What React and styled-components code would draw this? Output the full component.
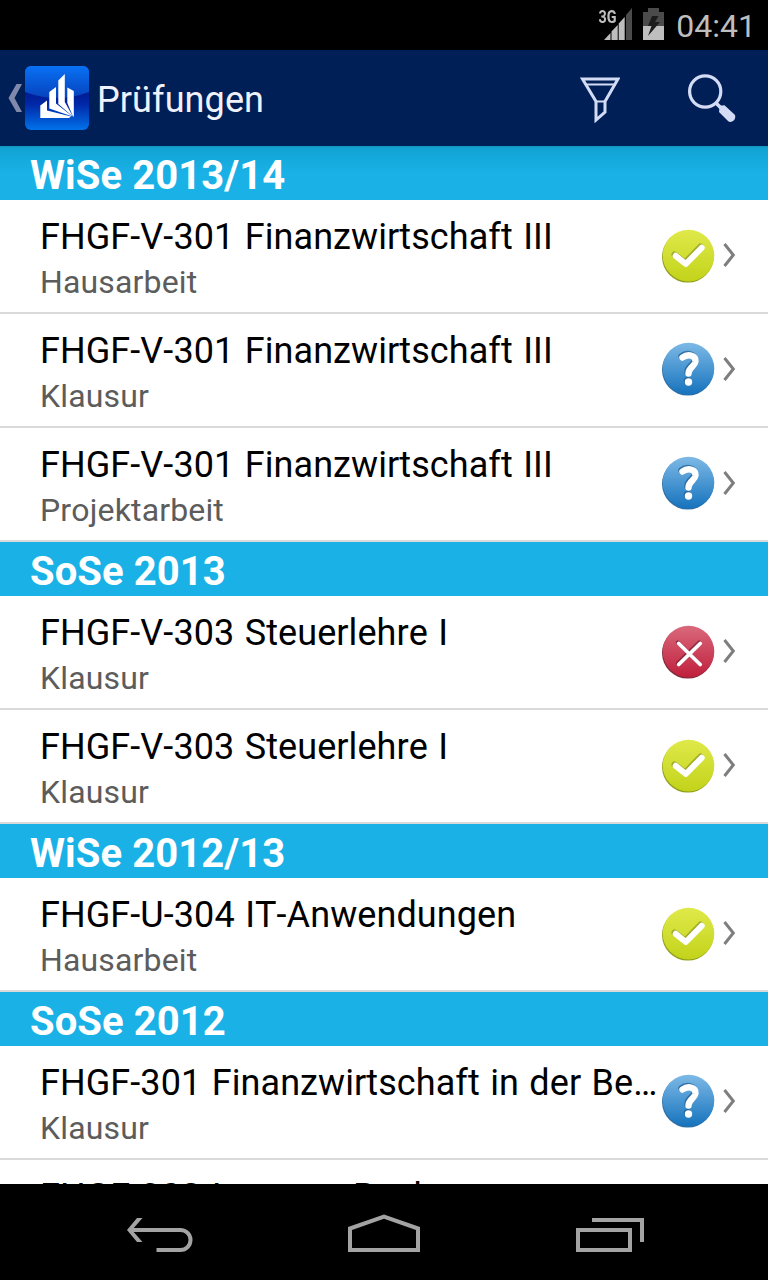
import styled, { createGlobalStyle } from 'styled-components';

const sections = [
  {
    term: 'WiSe 2013/14',
    exams: [
      { title: 'FHGF-V-301 Finanzwirtschaft III', type: 'Hausarbeit', status: 'passed' },
      { title: 'FHGF-V-301 Finanzwirtschaft III', type: 'Klausur', status: 'open' },
      { title: 'FHGF-V-301 Finanzwirtschaft III', type: 'Projektarbeit', status: 'open' },
    ],
  },
  {
    term: 'SoSe 2013',
    exams: [
      { title: 'FHGF-V-303 Steuerlehre I', type: 'Klausur', status: 'failed' },
      { title: 'FHGF-V-303 Steuerlehre I', type: 'Klausur', status: 'passed' },
    ],
  },
  {
    term: 'WiSe 2012/13',
    exams: [{ title: 'FHGF-U-304 IT-Anwendungen', type: 'Hausarbeit', status: 'passed' }],
  },
  {
    term: 'SoSe 2012',
    exams: [
      { title: 'FHGF-301 Finanzwirtschaft in der Betriebswirtschaft', type: 'Klausur', status: 'open' },
      { title: 'FHGF-302 Internes Rechnungswesen', type: '', status: '' },
    ],
  },
];

const badgeColors = {
  passed: ['#dfe94a', '#c3d31a', '#8f9c1c'],
  open: ['#7db9e6', '#1673bd', '#2f6ea5'],
  failed: ['#d9697c', '#c01f3c', '#7d2a3a'],
};

const SignalIcon = () => (
  <svg width="34" height="34" viewBox="0 0 34 34">
    <path d="M27 7L33 0V32H27Z" fill="#4b4b4b" />
    <path d="M5 32L11.500 25V32ZM12.500 23.500L18.700 17V32H12.500ZM19.700 15.500L25.700 9V32H19.700Z" fill="#bebebe" />
  </svg>
);

const BatteryIcon = () => (
  <svg width="21" height="32" viewBox="0 0 21 32">
    <path d="M0 4H5V0H16V4H21V18H0Z" fill="#4b4b4b" />
    <path d="M0 18H21V32H0Z" fill="#bebebe" />
    <path d="M9 8H15.500L12 14H17L5 28L8.500 18H5Z" fill="#1c1c1c" />
  </svg>
);

const UpIcon = () => (
  <svg width="14" height="28" viewBox="0 0 14 28">
    <path d="M8.500 0H14L6.500 14L14 28H8.500L0.500 14Z" fill="#8089ab" />
  </svg>
);

const AppLogo = () => (
  <svg width="64" height="64" viewBox="0 0 64 64">
    <defs>
      <linearGradient id="logoBase" x1="0" y1="0" x2="0" y2="1">
        <stop offset="0" stopColor="#0058d8" />
        <stop offset="0.42" stopColor="#001c94" />
        <stop offset="0.6" stopColor="#0028a8" />
        <stop offset="1" stopColor="#0072ea" />
      </linearGradient>
      <linearGradient id="logoGloss" x1="0" y1="0" x2="0" y2="1">
        <stop offset="0" stopColor="#0871f4" />
        <stop offset="1" stopColor="#0742bd" />
      </linearGradient>
      <clipPath id="logoClip">
        <rect width="64" height="64" rx="6" />
      </clipPath>
    </defs>
    <g clipPath="url(#logoClip)">
      <rect width="64" height="64" fill="url(#logoBase)" />
      <path d="M0 0H64V26Q32 38 0 26Z" fill="url(#logoGloss)" />
    </g>
    <g fill="#fff">
      <path d="M15.300 39.500L22 34.500V44.500L46 50.500L44 52H15.300Z" />
      <path d="M24.300 26L31 21V37.500L47.500 50.500L24.300 42.500Z" />
      <path d="M33.300 14.500L39.800 8V36L47.800 50.500L33.300 38Z" />
      <path d="M42.300 21.500L48.800 25V50.500H48L42.300 37Z" />
    </g>
  </svg>
);

const FilterIcon = () => (
  <svg width="40" height="46" viewBox="0 0 40 46" fill="none" stroke="#d3dcf4">
    <path d="M2.500 2H38L25 24.500V35L16 43V24.500Z" strokeWidth="3" />
    <path d="M5 7.500H36M15 24.500H25" strokeWidth="2" />
  </svg>
);

const SearchIcon = () => (
  <svg width="50" height="50" viewBox="0 0 50 50" fill="none" stroke="#d3dcf4">
    <circle cx="18.200" cy="17.500" r="15.600" strokeWidth="3.200" />
    <path d="M29 29L35 35" strokeWidth="3.500" />
    <path d="M32.800 31.800L37.500 31.300L47.500 40.500C50 43.500 46 49.500 41.500 47.500L32 38Z" fill="#d3dcf4" stroke="none" />
  </svg>
);

const StatusBadge = ({ status }) => {
  const [top, bottom, edge] = badgeColors[status];
  const id = `badge-${status}`;
  return (
    <Badge width="56" height="56" viewBox="0 0 56 56" $raised={status === 'open'}>
      <defs>
        <linearGradient id={id} x1="0" y1="0" x2="0" y2="1">
          <stop offset="0" stopColor={top} />
          <stop offset="1" stopColor={bottom} />
        </linearGradient>
        <filter id={`${id}-soft`} x="-10%" y="-10%" width="120%" height="120%">
          <feGaussianBlur stdDeviation="0.7" />
        </filter>
      </defs>
      <circle cx="27.800" cy="28.800" r="25.800" fill={edge} filter={`url(#${id}-soft)`} />
      <circle cx="28.500" cy="27.600" r="25.800" fill={`url(#${id})`} />
      {status === 'passed' && (
        <g fill="none" strokeLinecap="round" strokeLinejoin="round" strokeWidth="6">
          <path d="M14.500 26.500L25 34.500L40.500 18.500" stroke="#8f9b25" strokeOpacity="0.75" />
          <path d="M15.700 27.800L25.800 36L41.700 19.800" stroke="#fff" />
        </g>
      )}
      {status === 'failed' && (
        <g fill="none" strokeLinecap="round" strokeWidth="3.800">
          <path d="M17.700 18.300L39.200 39.300M39.200 18.300L17.700 39.300" stroke="#7d2436" strokeOpacity="0.8" />
          <path d="M18.700 19.500L40.200 40.500M40.200 19.500L18.700 40.500" stroke="#fff" />
        </g>
      )}
      {status === 'open' && (
        <g fill="none" strokeLinecap="round" strokeWidth="6.400">
          <g stroke="#235f93" strokeOpacity="0.75" transform="translate(-1 -1.200)">
            <path d="M22.500 16.500C27.500 12.800 36 13.600 35.500 20.500C35 25.500 28.500 26 28.500 32.500" />
            <path d="M28.500 41V41.100" strokeWidth="7.400" />
          </g>
          <g stroke="#fff">
            <path d="M22.500 16.500C27.500 12.800 36 13.600 35.500 20.500C35 25.500 28.500 26 28.500 32.500" />
            <path d="M28.500 41V41.100" strokeWidth="7.400" />
          </g>
        </g>
      )}
    </Badge>
  );
};

const ArrowIcon = () => (
  <Arrow width="14" height="26" viewBox="0 0 14 26">
    <path d="M2.500 2L11.300 13L2.500 24" fill="none" stroke="#7e7e7e" strokeWidth="3" />
  </Arrow>
);

const BackIcon = () => (
  <svg width="68" height="34" viewBox="0 0 68 34" fill="none" stroke="#a3a3a3" strokeWidth="4">
    <path d="M5 12H55.500A10 10 0 0 1 55.500 32H31.500" />
    <path d="M12 0H17.500L7 12L17.500 24H12L2 12Z" fill="#a3a3a3" stroke="none" />
  </svg>
);

const HomeIcon = () => (
  <svg width="72" height="38" viewBox="0 0 72 38">
    <path d="M2 36V14.500L36 2.500L70 14.500V36Z" fill="none" stroke="#a3a3a3" strokeWidth="4" />
  </svg>
);

const RecentIcon = () => (
  <svg width="70" height="34" viewBox="0 0 70 34" fill="none" stroke="#a3a3a3" strokeWidth="4">
    <path d="M4 12H56V32H4Z" />
    <path d="M18 2H68V24" />
  </svg>
);

const ExamRow = ({ exam }) => (
  <Row>
    <RowText>
      <ExamTitle>{exam.title}</ExamTitle>
      <ExamType>{exam.type}</ExamType>
    </RowText>
    {exam.status && <StatusBadge status={exam.status} />}
    <ArrowIcon />
  </Row>
);

const App = () => {
  return (
    <Screen>
      <GlobalStyle />
      <StatusBar>
        <Network>
          <span>3G</span>
          <SignalIcon />
        </Network>
        <BatteryIcon />
        <Clock>04:41</Clock>
      </StatusBar>
      <ActionBar>
        <HomeButton aria-label="Zurück">
          <UpIcon />
          <AppLogo />
        </HomeButton>
        <Title>Prüfungen</Title>
        <ActionButton aria-label="Filter" $top={4}>
          <FilterIcon />
        </ActionButton>
        <ActionButton aria-label="Suche" $top={2}>
          <SearchIcon />
        </ActionButton>
      </ActionBar>
      <List>
        {sections.map((section) => (
          <section key={section.term}>
            <SectionHeader>{section.term}</SectionHeader>
            {section.exams.map((exam, index) => (
              <ExamRow key={index} exam={exam} />
            ))}
          </section>
        ))}
      </List>
      <NavBar>
        <NavButton aria-label="Back">
          <BackIcon />
        </NavButton>
        <NavButton aria-label="Home">
          <HomeIcon />
        </NavButton>
        <NavButton aria-label="Recent">
          <RecentIcon />
        </NavButton>
      </NavBar>
    </Screen>
  );
};

const GlobalStyle = createGlobalStyle`
  * {
    box-sizing: border-box;
  }

  body {
    margin: 0;
    background: #000;
    font-family: Roboto, 'Liberation Sans', sans-serif;
    font-kerning: none;
  }

  button {
    padding: 0;
    border: 0;
    background: none;
  }

  svg {
    display: block;
    flex-shrink: 0;
  }
`;

const Screen = styled.div`
  display: flex;
  flex-direction: column;
  width: 768px;
  height: 1280px;
  overflow: hidden;
`;

const StatusBar = styled.header`
  display: flex;
  align-items: center;
  justify-content: flex-end;
  gap: 11px;
  height: 50px;
  padding: 0 12px 2px 0;
  background: #000;
  color: #bebebe;
`;

const Network = styled.div`
  display: flex;
  align-items: flex-start;
  margin: 2px -1px 0 0;

  span {
    margin: 0 -17px 0 0;
    font-size: 18px;
    font-weight: 700;
    line-height: 17px;
    transform: scaleX(0.8);
    transform-origin: right;
    z-index: 1;
  }
`;

const Clock = styled.span`
  margin-left: 1px;
  padding-top: 4px;
  font-size: 32px;
  line-height: 45px;
`;

const ActionBar = styled.div`
  display: flex;
  align-items: center;
  flex-shrink: 0;
  height: 96px;
  background: #001f57;
  color: #f0f2fb;
`;

const HomeButton = styled.button`
  display: flex;
  align-items: center;
  gap: 3px;
  padding-left: 8px;
`;

const Title = styled.h1`
  flex: 1;
  margin: 4px 0 0 8px;
  font-size: 36px;
  font-weight: 400;
  letter-spacing: 0.1px;
`;

const ActionButton = styled.button`
  display: flex;
  align-items: center;
  justify-content: center;
  width: 112px;
  height: 96px;
  padding-top: ${({ $top }) => $top}px;
`;

const List = styled.main`
  flex: 1;
  min-height: 0;
  overflow: hidden;
  background: #fff;

  section:first-child > h2 {
    background: linear-gradient(#1295c0 0, #12a3d3 3px, #14a9dc 12px, #1ab1e7 28px);
  }
`;

const SectionHeader = styled.h2`
  height: 54px;
  margin: 0;
  padding: 3px 30px 0;
  background: #1ab1e7;
  color: #fff;
  font-size: 40px;
  font-weight: 700;
  line-height: 54px;
  letter-spacing: 0.08px;
`;

const Row = styled.article`
  display: flex;
  align-items: center;
  height: 114px;
  padding: 0 32px 0 40px;
  border-bottom: 2px solid #dadada;
`;

const RowText = styled.div`
  flex: 1;
  align-self: flex-start;
  min-width: 0;
  padding-top: 13px;
`;

const ExamTitle = styled.div`
  overflow: hidden;
  color: #000;
  font-size: 36px;
  line-height: 48px;
  letter-spacing: 0.08px;
  word-spacing: 1.4px;
  text-overflow: ellipsis;
  white-space: nowrap;
`;

const ExamType = styled.div`
  color: #5c5c5c;
  font-size: 32px;
  line-height: 42px;
  letter-spacing: 0.15px;
`;

const Badge = styled.svg`
  margin-bottom: ${({ $raised }) => ($raised ? 2 : 0)}px;
`;

const Arrow = styled.svg`
  margin: 0 0 2px 6px;
`;

const NavBar = styled.nav`
  display: flex;
  align-items: flex-end;
  justify-content: center;
  flex-shrink: 0;
  height: 96px;
  padding-bottom: 28px;
  background: #000;
`;

const NavButton = styled.button`
  display: flex;
  justify-content: center;
  width: 225px;
`;

export default App;
